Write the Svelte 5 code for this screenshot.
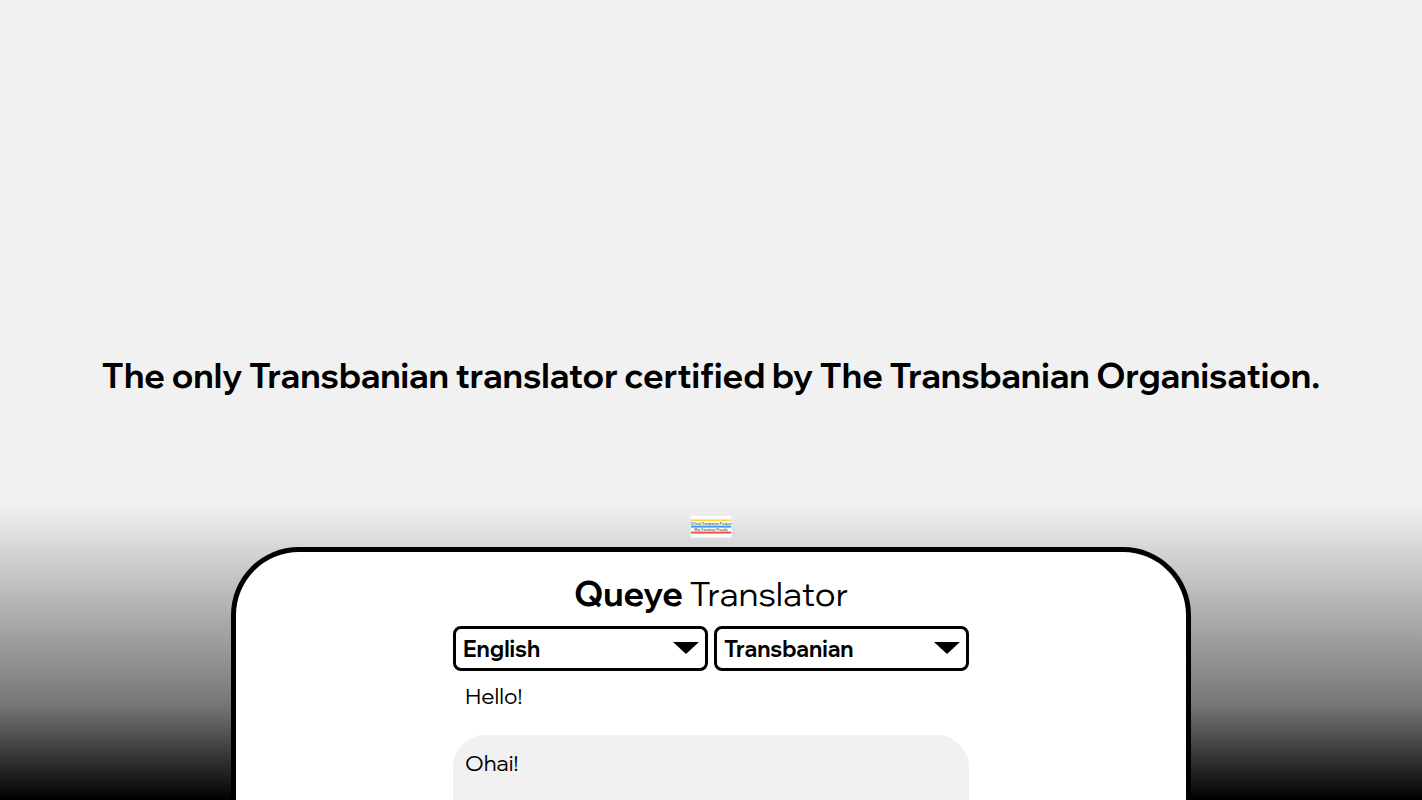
<script lang="ts">
	const languages = ['English', 'Transbanian'];

	let from = $state('English');
	let to = $state('Transbanian');
	let source = $state('Hello!');
	let result = $state('Ohai!');
</script>

{#snippet arrow()}
	<svg class="arrow" viewBox="0 0 26 12" aria-hidden="true">
		<path d="M0 0H26L13 12Z" />
	</svg>
{/snippet}

<main>
	<header>
		<h2>The only Transbanian translator certified by The Transbanian Organisation.</h2>
	</header>

	<svg class="badge" viewBox="0 0 42 24" role="img" aria-label="Official Transbanian Product">
		<rect width="42" height="23" rx="3" fill="#fff" />
		<rect x="0.5" y="0.5" width="41" height="22" rx="3" fill="none" stroke="#d9f5f6" />
		<rect x="1" y="4.4" width="40" height="1.8" fill="#f7dc2e" />
		<rect x="1" y="10.6" width="40" height="2" fill="#3f9be8" />
		<rect x="1" y="16.6" width="40" height="2" fill="#ea5548" />
		<text x="21" y="9.6">Official Transbanian Product</text>
		<text x="21" y="15.6">(Blip Translator) Proudly</text>
	</svg>

	<section class="panel">
		<h1><b>Queye</b> Translator</h1>
		<div class="translator">
			<div class="languages">
				<div class="picker">
					<select bind:value={from} aria-label="Translate from">
						{#each languages as language}
							<option value={language}>{language}</option>
						{/each}
					</select>
					{@render arrow()}
				</div>
				<div class="picker">
					<select bind:value={to} aria-label="Translate to">
						{#each languages as language}
							<option value={language}>{language}</option>
						{/each}
					</select>
					{@render arrow()}
				</div>
			</div>
			<textarea class="source" bind:value={source} aria-label="Text to translate"></textarea>
			<textarea class="result" value={result} readonly aria-label="Translation"></textarea>
		</div>
	</section>
</main>

<style>
	:global(body) {
		margin: 0;
		background: #f1f1f1;
	}

	main {
		display: flex;
		flex-direction: column;
		align-items: center;
		height: 100vh;
		overflow: hidden;
		color: #000;
		font-family: 'Wix Madefor Display', 'Figtree', 'Inter', sans-serif;
		background: linear-gradient(#f1f1f1 63%, #777 88%, #000 100%);
	}

	header {
		display: flex;
		align-items: flex-end;
		flex: 1;
		padding-bottom: 119px;
	}

	h2 {
		margin: 0;
		font-size: 34px;
		line-height: 40px;
		font-weight: 700;
		text-align: center;
	}

	.badge {
		flex: none;
		width: 42px;
		height: 24px;
		margin-bottom: 8px;
	}

	.badge text {
		font-size: 3px;
		font-weight: 600;
		text-anchor: middle;
		fill: #555;
	}

	.panel {
		box-sizing: border-box;
		flex: none;
		display: flex;
		flex-direction: column;
		align-items: center;
		width: 68%;
		max-width: 960px;
		height: 253px;
		padding-top: 20px;
		overflow: hidden;
		background: #fff;
		border: 5px solid #000;
		border-bottom: 0;
		border-radius: 68px 68px 0 0;
	}

	h1 {
		margin: 0 0 10px;
		font-size: 34px;
		line-height: 44px;
		font-weight: 400;
	}

	h1 b {
		font-weight: 700;
	}

	.translator {
		width: 100%;
		max-width: 516px;
	}

	.languages {
		display: grid;
		grid-template-columns: 1fr 1fr;
		gap: 6px;
	}

	.picker {
		position: relative;
	}

	select {
		display: block;
		box-sizing: border-box;
		width: 100%;
		height: 45px;
		padding: 0 7px;
		appearance: none;
		color: #000;
		background: #fff;
		border: 3px solid #000;
		border-radius: 8px;
		font: inherit;
		font-size: 22px;
		font-weight: 700;
	}

	.arrow {
		position: absolute;
		top: 16px;
		right: 9px;
		width: 26px;
		height: 12px;
		pointer-events: none;
	}

	textarea {
		display: block;
		box-sizing: border-box;
		width: 100%;
		padding: 11px 12px;
		resize: none;
		outline: none;
		color: #000;
		border: 0;
		font: inherit;
		font-size: 22px;
		line-height: 28px;
	}

	.source {
		height: 64px;
		background: #fff;
	}

	.result {
		height: 128px;
		padding-top: 14px;
		background: #f1f1f1;
		border-radius: 32px;
	}
</style>
